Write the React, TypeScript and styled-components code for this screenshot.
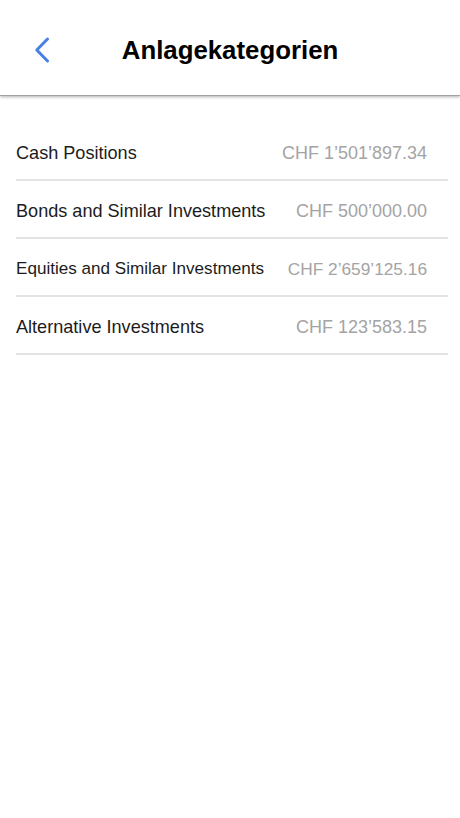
import React from "react";
import styled, { createGlobalStyle } from "styled-components";

const Global = createGlobalStyle`
  html, body { margin: 0; padding: 0; background: #ffffff; }
  body { font-family: "Liberation Sans", Arial, sans-serif; }
  * { box-sizing: border-box; }
`;

const Page = styled.div`
  width: 460px;
  min-height: 818px;
  background: #ffffff;
  display: flex;
  flex-direction: column;
`;

const Header = styled.header`
  height: 95px;
  display: grid;
  grid-template-columns: 1fr auto 1fr;
  align-items: center;
  background: #ffffff;
  box-shadow: 0 1px 0 #a2a2a2, 0 2px 3px rgba(0, 0, 0, 0.3);
  position: relative;
  z-index: 1;
`;

const BackButton = styled.button`
  justify-self: start;
  margin-left: 31px;
  padding: 3px;
  border: none;
  background: transparent;
  display: flex;
  align-items: center;
  cursor: pointer;
  margin-top: 4px;
`;

const Title = styled.h1`
  margin: 0;
  font-family: "Liberation Sans", Arial, sans-serif;
  font-weight: 700;
  font-size: 25.8px;
  color: #000000;
  margin-top: 6px;
`;

const List = styled.ul`
  list-style: none;
  margin: 28px 12px 0 16px;
  padding: 0;
`;

const Row = styled.li`
  height: 58px;
  display: flex;
  align-items: center;
  justify-content: space-between;
  border-bottom: 2px solid #e3e3e3;
  padding-right: 21px;
  padding-top: 4px;
`;

const Label = styled.span<{ $compact?: boolean }>`
  font-size: ${(p) => (p.$compact ? "17.1px" : "18.1px")};
  color: #1c1c1c;
`;

const Value = styled.span<{ $compact?: boolean }>`
  font-size: ${(p) => (p.$compact ? "17.3px" : "18px")};
  color: #a4a4a4;
`;

const rows = [
  { label: "Cash Positions", value: "CHF 1’501’897.34" },
  { label: "Bonds and Similar Investments", value: "CHF 500’000.00" },
  { label: "Equities and Similar Investments", value: "CHF 2’659’125.16", compact: true },
  { label: "Alternative Investments", value: "CHF 123’583.15" },
];

export default function App() {
  return (
    <Page>
      <Global />
      <Header>
        <BackButton aria-label="Zurück">
          <svg width="16" height="26" viewBox="0 0 16 26" fill="none">
            <path
              d="M13.5 2 L2.8 13 L13.5 24"
              stroke="#4a80e6"
              strokeWidth="3"
              strokeLinecap="round"
              strokeLinejoin="round"
            />
          </svg>
        </BackButton>
        <Title>Anlagekategorien</Title>
        <div />
      </Header>
      <List>
        {rows.map((r) => (
          <Row key={r.label}>
            <Label $compact={r.compact}>{r.label}</Label>
            <Value $compact={r.compact}>{r.value}</Value>
          </Row>
        ))}
      </List>
    </Page>
  );
}
